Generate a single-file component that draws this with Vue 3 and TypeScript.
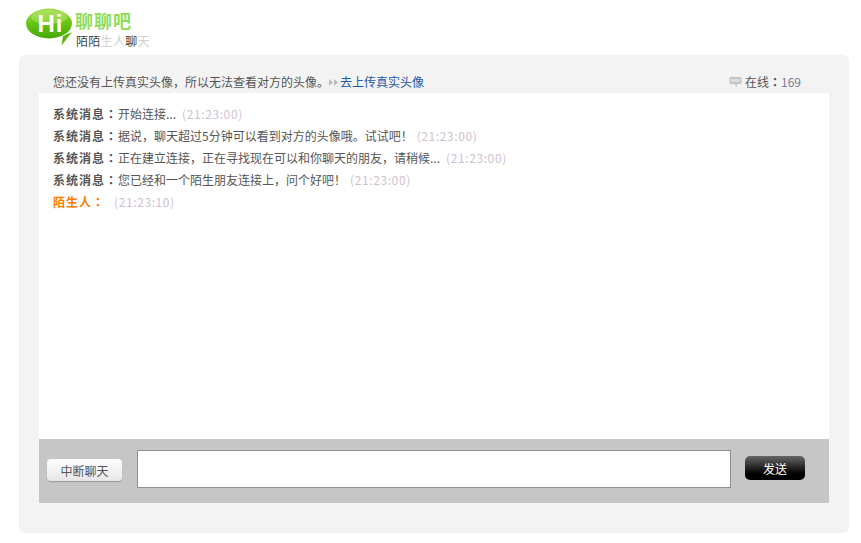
<script setup lang="ts">
interface Msg { who: string; text: string; time: string; self?: boolean; tight?: boolean }
const messages: Msg[] = [
  { who: '系统消息', text: '开始连接...', time: '(21:23:00)' },
  { who: '系统消息', text: '据说，聊天超过5分钟可以看到对方的头像哦。试试吧！', time: '(21:23:00)', tight: true },
  { who: '系统消息', text: '正在建立连接，正在寻找现在可以和你聊天的朋友，请稍候...', time: '(21:23:00)' },
  { who: '系统消息', text: '您已经和一个陌生朋友连接上，问个好吧！', time: '(21:23:00)', tight: true },
  { who: '陌生人', text: '', time: '(21:23:10)', self: true }
]
</script>

<template>
  <div class="page">
    <header class="head">
      <svg class="bubble" width="52" height="42" viewBox="0 0 52 42">
        <defs>
          <linearGradient id="g" x1="0" y1="0" x2="0" y2="1">
            <stop offset="0" stop-color="#a2dc48" />
            <stop offset="0.5" stop-color="#66c414" />
            <stop offset="1" stop-color="#46a808" />
          </linearGradient>
        </defs>
        <path d="M47 24 L36.500 37.500 L38 28 Z" fill="#58b60c" />
        <ellipse cx="24" cy="15.500" rx="23" ry="15" fill="url(#g)" />
        <ellipse cx="24" cy="9" rx="18" ry="7" fill="#c4ee86" opacity="0.4" />
        <text x="12.500" y="24" class="hi">Hi</text>
      </svg>
      <div class="brand">
        <div class="name">聊聊吧</div>
        <div class="slogan"><b>陌陌</b>生人<b>聊</b>天</div>
      </div>
    </header>

    <main class="panel">
      <div class="notice">
        <div class="notice-left">
          <span>您还没有上传真实头像，所以无法查看对方的头像。</span>
          <svg class="arrows" width="9" height="7" viewBox="0 0 9 7">
            <path d="M0 0 L4 3.500 L0 7 Z M5 0 L9 3.500 L5 7 Z" fill="#bbb" />
          </svg>
          <a class="upload">去上传真实头像</a>
        </div>
        <div class="online">
          <svg width="13" height="12" viewBox="0 0 13 12">
            <path d="M1.500 1 H11.500 Q12.500 1 12.500 2 V7 Q12.500 8 11.500 8 H8 V11 L5 8 H1.500 Q0.500 8 0.500 7 V2 Q0.500 1 1.500 1 Z" fill="#c4c4c4" />
            <rect x="2" y="3" width="9" height="3" fill="#ddd" />
          </svg>
          <span>在线<b class="mark">：</b></span><span class="count">169</span>
        </div>
      </div>

      <section class="log">
        <p v-for="(m, i) in messages" :key="i" class="line">
          <b :class="{ self: m.self }">{{ m.who }}<span class="mark">：</span></b><span>{{ m.text }}</span><span class="time" :class="{ 'time-self': m.self, 'time-tight': m.tight }">{{ m.time }}</span>
        </p>
      </section>

      <footer class="bar">
        <button class="stop">中断聊天</button>
        <input class="entry" type="text" />
        <button class="send">发送</button>
      </footer>
    </main>
  </div>
</template>

<style scoped>
.page {
  width: 861px;
  height: 543px;
  overflow: hidden;
  background: #fff;
  font: 12px/22px "Noto Sans CJK SC", "Liberation Sans", sans-serif;
  color: #555;
}
.mark { font-family: "Noto Sans CJK JP", sans-serif; }
.head {
  height: 55px;
  display: flex;
  padding: 8px 0 0 25px;
  box-sizing: border-box;
}
.bubble { flex: none; }
.hi {
  font: bold 24px "Liberation Sans", sans-serif;
  fill: #fff;
  letter-spacing: 1px;
}
.brand {
  margin-left: -2px;
  display: flex;
  flex-direction: column;
}
.name {
  font-size: 18px;
  font-weight: 700;
  line-height: 25px;
  color: #8fdc5c;
  letter-spacing: 1px;
}
.slogan {
  font-size: 12px;
  line-height: 15px;
  color: #d0d0d0;
  margin-left: 1px;
  letter-spacing: 0.3px;
}
.slogan b { font-weight: 400; color: #444; }
.panel {
  width: 830px;
  height: 478px;
  margin-left: 19px;
  padding: 0 20px 30px;
  box-sizing: border-box;
  background: #f3f3f3;
  border-radius: 6px;
  display: flex;
  flex-direction: column;
}
.notice {
  height: 38px;
  flex: none;
  padding: 16px 28px 0 14px;
  box-sizing: border-box;
  display: flex;
  justify-content: space-between;
  align-items: center;
}
.notice-left, .online { display: flex; align-items: center; }
.arrows { margin: 0 2px 0 0; }
.upload { color: #1f58a8; }
.online svg { margin-right: 3px; }
.count { color: #7a7a9a; }
.log {
  flex: 1;
  background: #fff;
  padding: 10px 14px 0;
}
.line { margin: 0; height: 22px; white-space: nowrap; }
.line b { color: #555; letter-spacing: 1px; }
.line b.self { color: #ff7a00; }
.time { color: #d0bfd0; margin-left: 6px; letter-spacing: 0.6px; }
.time-tight { margin-left: 4px; }
.time-self { margin-left: 9px; }
.bar {
  height: 64px;
  flex: none;
  background: #c6c6c6;
  display: flex;
  align-items: flex-start;
  padding-left: 8px;
}
button {
  font: inherit;
  border: 0;
}
.stop {
  width: 75px;
  height: 22px;
  margin-top: 20px;
  padding: 1px 0 0;
  border-radius: 4px;
  color: #555;
  background: linear-gradient(#fff, #e6e6e6);
  box-shadow: 0 1px 1px #999;
}
.entry {
  width: 594px;
  height: 38px;
  margin: 11px 0 0 15px;
  box-sizing: border-box;
  border: 1px solid #8f8f8f;
  background: #fff;
  outline: 0;
}
.send {
  width: 60px;
  height: 24px;
  margin: 17px 0 0 14px;
  padding: 2px 0 0;
  border-radius: 5px;
  color: #fff;
  background: linear-gradient(#666, #000 75%);
}
</style>
